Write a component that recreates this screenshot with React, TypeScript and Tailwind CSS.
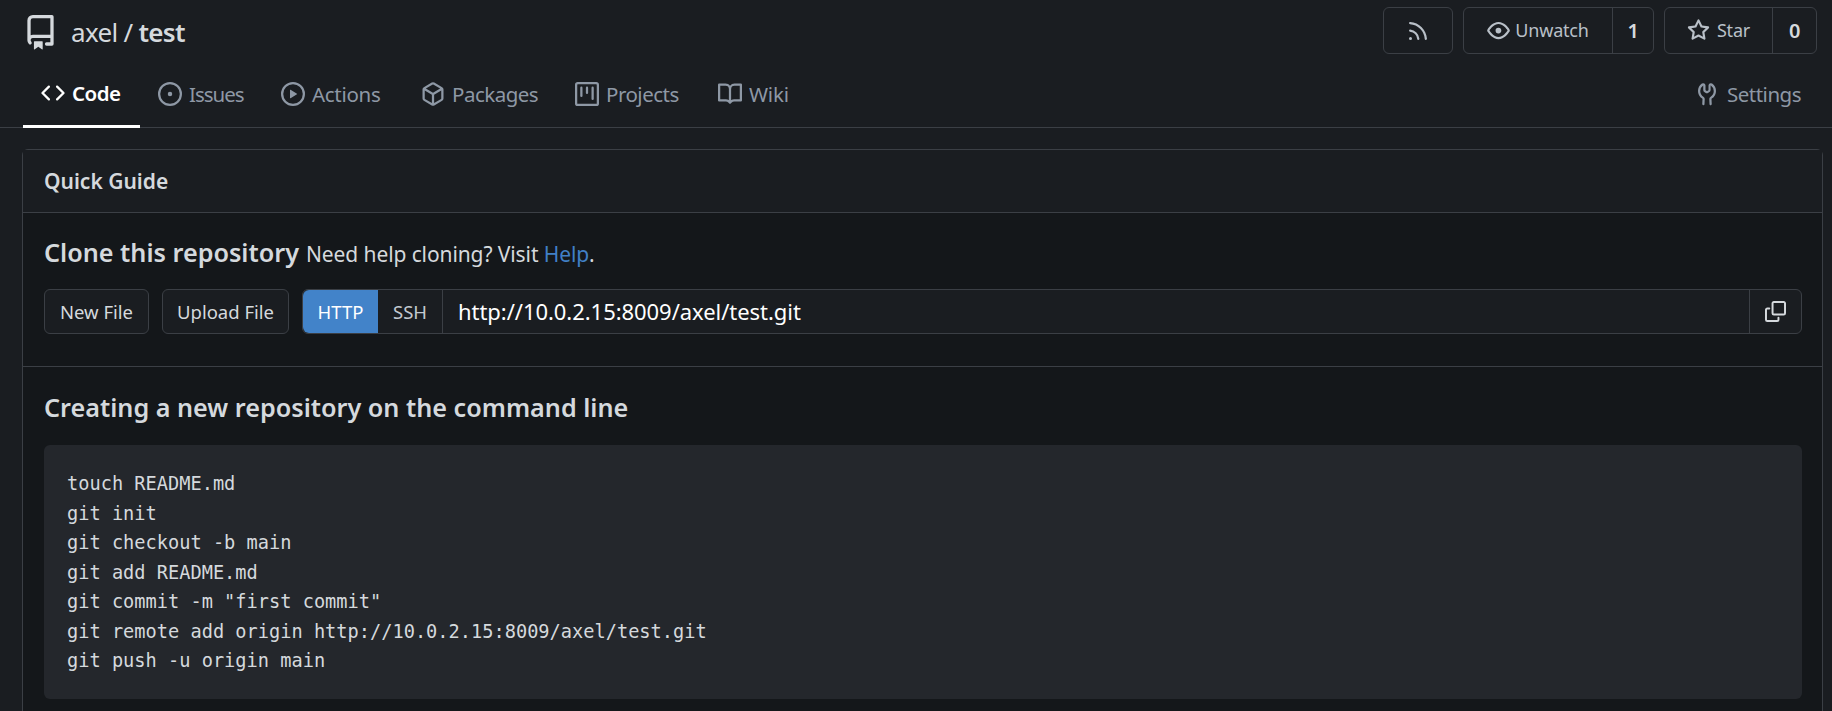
// 16px octicon paths, the react-icons ones are the thinner 24px cut
const paths = {
  repo: "M2 2.5A2.5 2.5 0 0 1 4.5 0h8.75a.75.75 0 0 1 .75.75v12.5a.75.75 0 0 1-.75.75h-2.5a.75.75 0 0 1 0-1.5h1.75v-2h-8a1 1 0 0 0-.714 1.7.75.75 0 1 1-1.072 1.05A2.495 2.495 0 0 1 2 11.5Zm10.5-1h-8a1 1 0 0 0-1 1v6.708A2.486 2.486 0 0 1 4.5 9h8ZM5 12.25a.25.25 0 0 1 .25-.25h3.5a.25.25 0 0 1 .25.25v3.25a.25.25 0 0 1-.4.2l-1.45-1.087a.249.249 0 0 0-.3 0L5.4 15.7a.25.25 0 0 1-.4-.2Z",
  code: "m11.28 3.22 4.25 4.25a.75.75 0 0 1 0 1.06l-4.25 4.25a.749.749 0 0 1-1.275-.326.749.749 0 0 1 .215-.734L13.94 8l-3.72-3.72a.749.749 0 0 1 .326-1.275.749.749 0 0 1 .734.215Zm-6.56 0a.751.751 0 0 1 1.042.018.751.751 0 0 1 .018 1.042L2.06 8l3.72 3.72a.749.749 0 0 1-.326 1.275.749.749 0 0 1-.734-.215L.47 8.53a.75.75 0 0 1 0-1.06Z",
  issue: "M8 9.5a1.5 1.5 0 1 0 0-3 1.5 1.5 0 0 0 0 3ZM8 0a8 8 0 1 1 0 16A8 8 0 0 1 8 0ZM1.5 8a6.5 6.5 0 1 0 13 0 6.5 6.5 0 0 0-13 0Z",
  play: "M8 0a8 8 0 1 1 0 16A8 8 0 0 1 8 0ZM1.5 8a6.5 6.5 0 1 0 13 0 6.5 6.5 0 0 0-13 0Zm4.879-2.773 4.264 2.559a.25.25 0 0 1 0 .428l-4.264 2.559A.25.25 0 0 1 6 10.559V5.442a.25.25 0 0 1 .379-.215Z",
  pkg: "m8.878.392 5.25 3.045c.54.314.872.89.872 1.514v6.098a1.75 1.75 0 0 1-.872 1.514l-5.25 3.045a1.75 1.75 0 0 1-1.756 0l-5.25-3.045A1.75 1.75 0 0 1 1 11.049V4.951c0-.624.332-1.201.872-1.514L7.122.392a1.75 1.75 0 0 1 1.756 0ZM7.875 1.69l-4.63 2.685L8 7.133l4.755-2.758-4.63-2.685a.248.248 0 0 0-.25 0ZM2.5 5.677v5.372c0 .09.047.171.125.216l4.625 2.683V8.432Zm6.25 8.271 4.625-2.683a.25.25 0 0 0 .125-.216V5.677L8.75 8.432Z",
  project: "M1.75 0h12.5C15.216 0 16 .784 16 1.75v12.5A1.75 1.75 0 0 1 14.25 16H1.75A1.75 1.75 0 0 1 0 14.25V1.75C0 .784.784 0 1.75 0ZM1.5 1.75v12.5c0 .138.112.25.25.25h12.5a.25.25 0 0 0 .25-.25V1.75a.25.25 0 0 0-.25-.25H1.75a.25.25 0 0 0-.25.25ZM11.75 3a.75.75 0 0 1 .75.75v7.5a.75.75 0 0 1-1.5 0v-7.5a.75.75 0 0 1 .75-.75Zm-8.25.75a.75.75 0 0 1 1.5 0v5.5a.75.75 0 0 1-1.5 0ZM8 3a.75.75 0 0 1 .75.75v3.5a.75.75 0 0 1-1.5 0v-3.5A.75.75 0 0 1 8 3Z",
  book: "M0 1.75A.75.75 0 0 1 .75 1h4.253c1.227 0 2.317.59 3 1.501A3.743 3.743 0 0 1 11.006 1h4.245a.75.75 0 0 1 .75.75v10.5a.75.75 0 0 1-.75.75h-4.507a2.25 2.25 0 0 0-1.591.659l-.622.621a.75.75 0 0 1-1.06 0l-.622-.621A2.25 2.25 0 0 0 5.258 13H.75a.75.75 0 0 1-.75-.75Zm7.251 10.324.004-5.073-.002-2.253A2.25 2.25 0 0 0 5.003 2.5H1.5v9h3.757a3.75 3.75 0 0 1 1.994.574ZM8.755 4.75l-.004 7.322a3.752 3.752 0 0 1 1.992-.572H14.5v-9h-3.495a2.25 2.25 0 0 0-2.25 2.25Z",
  eye: "M8 2c1.981 0 3.671.992 4.933 2.078 1.27 1.091 2.187 2.345 2.637 3.023a1.62 1.62 0 0 1 0 1.798c-.45.678-1.367 1.932-2.637 3.023C11.67 13.008 9.981 14 8 14c-1.981 0-3.671-.992-4.933-2.078C1.797 10.83.88 9.576.43 8.898a1.62 1.62 0 0 1 0-1.798c.45-.677 1.367-1.931 2.637-3.022C4.33 2.992 6.019 2 8 2ZM1.679 7.932a.12.12 0 0 0 0 .136c.411.622 1.241 1.75 2.366 2.717C5.176 11.758 6.527 12.5 8 12.5c1.473 0 2.825-.742 3.955-1.715 1.124-.967 1.954-2.096 2.366-2.717a.12.12 0 0 0 0-.136c-.412-.621-1.242-1.75-2.366-2.717C10.824 4.242 9.473 3.5 8 3.5c-1.473 0-2.825.742-3.955 1.715-1.124.967-1.954 2.096-2.366 2.717ZM8 10a2 2 0 1 1-.001-3.999A2 2 0 0 1 8 10Z",
  star: "M8 .25a.75.75 0 0 1 .673.418l1.882 3.815 4.21.612a.75.75 0 0 1 .416 1.279l-3.046 2.97.719 4.192a.751.751 0 0 1-1.088.791L8 12.347l-3.766 1.98a.75.75 0 0 1-1.088-.79l.72-4.194L.818 6.374a.75.75 0 0 1 .416-1.28l4.21-.611L7.327.668A.75.75 0 0 1 8 .25Zm0 2.445L6.615 5.5a.75.75 0 0 1-.564.41l-3.097.45 2.24 2.184a.75.75 0 0 1 .216.664l-.528 3.084 2.769-1.456a.75.75 0 0 1 .698 0l2.77 1.456-.53-3.084a.75.75 0 0 1 .216-.664l2.24-2.183-3.096-.45a.75.75 0 0 1-.564-.41L8 2.694Z",
  rss: "M2.002 2.725a.75.75 0 0 1 .797-.699C8.79 2.42 13.58 7.21 13.974 13.201a.75.75 0 0 1-1.497.098 10.502 10.502 0 0 0-9.776-9.776.747.747 0 0 1-.7-.798ZM2.84 7.05h-.002a7.002 7.002 0 0 1 6.113 6.111.75.75 0 0 1-1.49.178 5.503 5.503 0 0 0-4.8-4.8.75.75 0 0 1 .179-1.489ZM2 13a1 1 0 1 1 2 0 1 1 0 0 1-2 0Z",
  copy: "M0 6.75C0 5.784.784 5 1.75 5h1.5a.75.75 0 0 1 0 1.5h-1.5a.25.25 0 0 0-.25.25v7.5c0 .138.112.25.25.25h7.5a.25.25 0 0 0 .25-.25v-1.5a.75.75 0 0 1 1.5 0v1.5A1.75 1.75 0 0 1 9.25 16h-7.5A1.75 1.75 0 0 1 0 14.25ZM5 1.75C5 .784 5.784 0 6.75 0h7.5C15.216 0 16 .784 16 1.75v7.5A1.75 1.75 0 0 1 14.25 11h-7.5A1.75 1.75 0 0 1 5 9.25Zm1.75-.25a.25.25 0 0 0-.25.25v7.5c0 .138.112.25.25.25h7.5a.25.25 0 0 0 .25-.25v-7.5a.25.25 0 0 0-.25-.25Z",
  tools: "M5.433 2.304A4.492 4.492 0 0 0 3.5 6c0 1.598.832 3.002 2.09 3.802.518.328.929.923.902 1.64v.008l-.164 3.337a.75.75 0 1 1-1.498-.073l.163-3.33c.002-.085-.05-.216-.207-.316A5.996 5.996 0 0 1 2 6a5.993 5.993 0 0 1 2.567-4.92 1.482 1.482 0 0 1 1.673-.04c.462.296.76.827.76 1.423v2.82c0 .082.041.16.11.206l.75.51a.25.25 0 0 0 .28 0l.75-.51A.249.249 0 0 0 9 5.282V2.463c0-.596.298-1.127.76-1.423a1.482 1.482 0 0 1 1.673.04A5.993 5.993 0 0 1 14 6a5.996 5.996 0 0 1-2.786 5.068c-.157.1-.209.23-.207.315l.163 3.33a.752.752 0 0 1-1.094.714.75.75 0 0 1-.404-.64l-.164-3.345c-.027-.717.384-1.312.902-1.64A4.495 4.495 0 0 0 12.5 6a4.492 4.492 0 0 0-1.933-3.696c-.024-.017-.067-.028-.104.007-.04.032-.063.08-.063.152v2.82a1.75 1.75 0 0 1-.767 1.447l-.75.51a1.75 1.75 0 0 1-1.966 0l-.75-.51A1.75 1.75 0 0 1 5.5 5.282V2.463c0-.072-.023-.12-.063-.152-.037-.035-.08-.024-.104-.007Z",
};

function Octicon({ name, size }: { name: keyof typeof paths; size: number }) {
  return (
    <svg viewBox="0 0 16 16" width={size} height={size} fill="currentColor" className="shrink-0">
      <path d={paths[name]} />
    </svg>
  );
}

const tabs: { label: string; icon: keyof typeof paths; width: string }[] = [
  { label: "Issues", icon: "issue", width: "w-[123px] tracking-[-1px]" },
  { label: "Actions", icon: "play", width: "w-[140px] tracking-[-0.3px]" },
  { label: "Packages", icon: "pkg", width: "w-[154px]" },
  { label: "Projects", icon: "project", width: "w-[143px]" },
  { label: "Wiki", icon: "book", width: "w-[100px] tracking-[-0.2px]" },
];

const commands = [
  "touch README.md",
  "git init",
  "git checkout -b main",
  "git add README.md",
  'git commit -m "first commit"',
  "git remote add origin http://10.0.2.15:8009/axel/test.git",
  "git push -u origin main",
];

export default function App() {
  return (
    <div className="h-[711px] overflow-hidden bg-[#1a1d21] font-['Noto_Sans',sans-serif] text-[#d5d9dd]">
      {/* Repo header */}
      <div className="border-b border-[#3b3f45]">
        <div className="flex h-[61px] items-start justify-between pr-[15px] pl-[23px] pt-[7px]">
          <div className="flex items-center gap-[13px] pt-[5px] text-[#d5d9dd]">
            <Octicon name="repo" size={35} />
            <div className="text-[26px] leading-[40px] tracking-[-0.7px]">
              axel <span>/</span> <span className="font-semibold">test</span>
            </div>
          </div>
          <div className="flex gap-[10px] text-[18px] tracking-[-0.2px] text-[#b9c0c8]">
            <button className="flex h-[47px] w-[70px] items-center justify-center rounded-md border border-[#3b3f45]">
              <Octicon name="rss" size={24} />
            </button>
            <div className="flex h-[47px] w-[191px] rounded-md border border-[#3b3f45]">
              <div className="flex w-[148px] items-center justify-center gap-[5px]">
                <Octicon name="eye" size={23} />
                <span>Unwatch</span>
              </div>
              <div className="flex flex-1 items-center justify-center border-l border-[#3b3f45] text-[20px] font-semibold text-[#d5d9dd]">
                1
              </div>
            </div>
            <div className="flex h-[47px] w-[153px] rounded-md border border-[#3b3f45]">
              <div className="flex w-[107px] items-center justify-center gap-[7px]">
                <Octicon name="star" size={23} />
                <span>Star</span>
              </div>
              <div className="flex flex-1 items-center justify-center border-l border-[#3b3f45] text-[20px] font-semibold text-[#d5d9dd]">
                0
              </div>
            </div>
          </div>
        </div>
        <div className="flex h-[66px] items-stretch justify-between pr-[31px] pl-[23px] text-[20.5px] tracking-[-0.5px] text-[#8e98a5]">
          <div className="flex">
            <div className="-mb-px flex w-[117px] items-center gap-[7px] border-b-[3px] border-white pl-[18px] font-semibold text-white">
              <Octicon name="code" size={24} />
              <span>Code</span>
            </div>
            {tabs.map((tab) => (
              <div key={tab.label} className={`flex items-center gap-[7px] pl-[18px] ${tab.width}`}>
                <Octicon name={tab.icon} size={24} />
                <span>{tab.label}</span>
              </div>
            ))}
          </div>
          <div className="flex items-center gap-[8px]">
            <Octicon name="tools" size={24} />
            <span>Settings</span>
          </div>
        </div>
      </div>

      {/* Quick guide card */}
      <div className="mt-[21px] mr-[9px] ml-[22px] rounded-t-md border border-[#3b3f45] bg-[#14171a]">
        <div className="flex h-[63px] items-center border-b border-[#3b3f45] bg-[#1a1d21] pt-px pr-[20px] pl-[21px] text-[21px] font-semibold">
          Quick Guide
        </div>
        <div className="h-[154px] border-b border-[#3b3f45] pt-[20px] pr-[20px] pl-[21px]">
          <div className="flex h-[40px] items-center gap-[7px]">
            <span className="text-[25.2px] font-semibold">Clone this repository</span>
            <span className="pt-[3px] text-[21px] tracking-[-0.1px]">
              Need help cloning? Visit <a className="text-[#4180c6]">Help</a>.
            </span>
          </div>
          <div className="mt-[16px] flex h-[45px] gap-[13px] text-[18.5px] text-[#d5d9dd]">
            <button className="w-[105px] rounded-md border border-[#3b3f45] bg-[#1a1d21]">New File</button>
            <button className="w-[127px] rounded-md border border-[#3b3f45] bg-[#1a1d21]">Upload File</button>
            <div className="flex flex-1 rounded-md border border-[#3b3f45] bg-[#1a1d21]">
              <div className="flex w-[75px] items-center justify-center rounded-l-md bg-[#4283c9] text-white">
                HTTP
              </div>
              <div className="flex w-[65px] items-center justify-center border-r border-[#3b3f45] text-[#c3c9d0]">
                SSH
              </div>
              <div className="flex flex-1 items-center pl-[15px] text-[22px] tracking-[-0.05px] text-white">
                http://10.0.2.15:8009/axel/test.git
              </div>
              <div className="flex w-[52px] items-center justify-center border-l border-[#3b3f45] text-[#d5d9dd]">
                <Octicon name="copy" size={21} />
              </div>
            </div>
          </div>
        </div>
        <div className="h-[380px] pt-[21px] pr-[20px] pl-[21px]">
          <div className="flex h-[40px] items-center text-[25.2px] font-semibold">
            Creating a new repository on the command line
          </div>
          <pre className="mt-[17px] h-[254px] rounded-md bg-[#24272c] pt-[24px] pl-[23px] font-['DejaVu_Sans_Mono',monospace] text-[18.65px] leading-[29.5px] text-[#d5d9dd]">
            {commands.join("\n")}
          </pre>
        </div>
      </div>
    </div>
  );
}
